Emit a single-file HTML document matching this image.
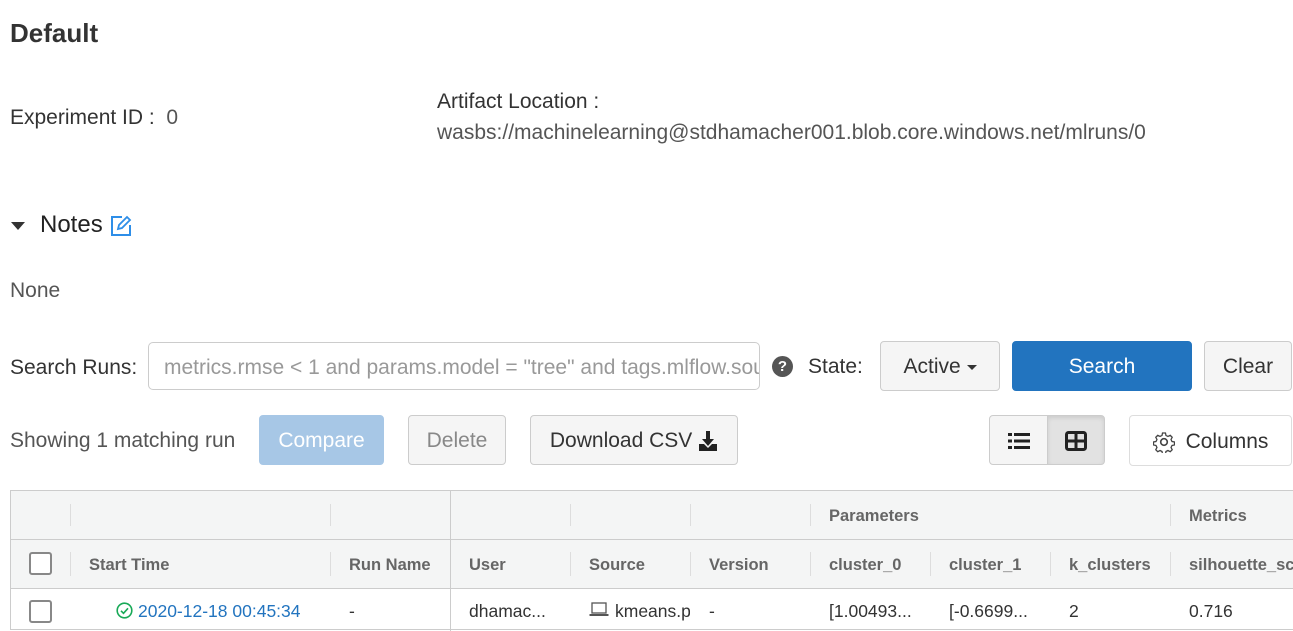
<!DOCTYPE html>
<html><head><meta charset="utf-8"><style>
*{box-sizing:border-box;margin:0;padding:0}
body{width:1293px;height:627px;overflow:hidden;background:#fff;font-family:"Liberation Sans",Arial,sans-serif;color:#333;position:relative}
.a{position:absolute;white-space:nowrap}
.btn{position:absolute;border:1px solid #ccc;border-radius:4px;background:#f5f5f5;font-size:21px;display:flex;align-items:center;justify-content:center;color:#333;padding-top:2px}
.th{position:absolute;font-size:16.5px;color:#666;white-space:nowrap;font-weight:bold}
.sep{position:absolute;width:1px;background:#ddd}
.cb{position:absolute;width:23px;height:23px;border:2px solid #888;border-radius:3px;background:#fff}
.td{position:absolute;font-size:17.5px;color:#333;white-space:nowrap;top:601px}
</style></head><body>
<div class="a" style="left:10px;top:18px;font-size:26px;font-weight:bold;color:#333">Default</div>
<div class="a" style="left:10px;top:106px;font-size:21px;color:#333">Experiment ID :&nbsp; <span style="color:#555">0</span></div>
<div class="a" style="left:437px;top:90px;font-size:21px;color:#333">Artifact Location :</div>
<div class="a" style="left:437px;top:121px;font-size:21px;color:#555">wasbs://machinelearning@stdhamacher001.blob.core.windows.net/mlruns/0</div>
<div class="a" style="left:11px;top:222px;width:0;height:0;border-left:7px solid transparent;border-right:7px solid transparent;border-top:8px solid #333"></div>
<div class="a" style="left:40px;top:211px;font-size:24px;color:#222">Notes</div>
<svg class="a" style="left:110px;top:215px" width="22" height="22" viewBox="0 0 22 22"><path d="M12 2H2v18h18V10" fill="none" stroke="#2e8ee8" stroke-width="2"/><path d="M8 14l1-4 8-8 3 3-8 8z" fill="none" stroke="#2e8ee8" stroke-width="1.8"/></svg>
<div class="a" style="left:10px;top:279px;font-size:21px;color:#555">None</div>

<div class="a" style="left:10px;top:356px;font-size:21px;color:#333">Search Runs:</div>
<div class="a" style="left:148px;top:342px;width:612px;height:48px;border:1px solid #ccc;border-radius:5px;overflow:hidden;padding:13px 15px;font-size:21px;color:#999">metrics.rmse &lt; 1 and params.model = "tree" and tags.mlflow.source</div>
<div class="a" style="left:772px;top:356px;width:21px;height:21px;border-radius:50%;background:#555;color:#fff;font-size:15px;font-weight:bold;text-align:center;line-height:21px">?</div>
<div class="a" style="left:808px;top:355px;font-size:21px;color:#333">State:</div>
<div class="btn" style="left:880px;top:341px;width:120px;height:50px">Active&nbsp;<span style="display:inline-block;border-left:5px solid transparent;border-right:5px solid transparent;border-top:5px solid #333"></span></div>
<div class="btn" style="left:1012px;top:341px;width:180px;height:50px;background:#2274bf;border-color:#2274bf;color:#fff">Search</div>
<div class="btn" style="left:1204px;top:341px;width:88px;height:50px">Clear</div>

<div class="a" style="left:10px;top:429px;font-size:21px;color:#555">Showing 1 matching run</div>
<div class="btn" style="left:259px;top:415px;width:125px;height:50px;background:#a7c7e6;border-color:#a7c7e6;color:#fff">Compare</div>
<div class="btn" style="left:408px;top:415px;width:98px;height:50px;color:#888">Delete</div>
<div class="btn" style="left:530px;top:415px;width:208px;height:50px">Download CSV&nbsp;<svg width="20" height="22" viewBox="0 0 20 22"><path d="M8 1h4v8h4l-6 7-6-7h4z" fill="#222"/><path d="M1 14h5l4 4 4-4h5v7H1z" fill="#222"/></svg></div>
<div class="btn" style="left:989px;top:415px;width:59px;height:50px;border-radius:4px 0 0 4px;background:#f5f5f5"><svg width="22" height="18" viewBox="0 0 22 18"><g fill="#222"><rect x="0" y="1" width="4" height="3"/><rect x="6" y="1" width="16" height="3"/><rect x="0" y="7.5" width="4" height="3"/><rect x="6" y="7.5" width="16" height="3"/><rect x="0" y="14" width="4" height="3"/><rect x="6" y="14" width="16" height="3"/></g></svg></div>
<div class="btn" style="left:1047px;top:415px;width:58px;height:50px;border-radius:0 4px 4px 0;background:#e2e2e2;box-shadow:inset 0 2px 4px rgba(0,0,0,.1)"><svg width="22" height="20" viewBox="0 0 22 20"><rect x="1.5" y="1.5" width="19" height="17" rx="2" fill="none" stroke="#222" stroke-width="3"/><path d="M1 10h20M11 1v18" stroke="#222" stroke-width="3"/></svg></div>
<div class="btn" style="left:1129px;top:415px;width:163px;height:51px;background:#fff;border-color:#ddd"><svg width="22" height="22" viewBox="0 0 20 20" style="margin-right:11px"><circle cx="10" cy="10" r="3" fill="none" stroke="#444" stroke-width="1.5"/><path d="M8.5 1.5h3l.5 2.5 2 1 2.3-1.2 2 2-1.2 2.3 1 2 2.5.5v3l-2.5.5-1 2 1.2 2.3-2 2-2.3-1.2-2 1-.5 2.5h-3l-.5-2.5-2-1-2.3 1.2-2-2 1.2-2.3-1-2-2.5-.5v-3l2.5-.5 1-2-1.2-2.3 2-2 2.3 1.2 2-1z" fill="none" stroke="#444" stroke-width="1.3" transform="scale(.9) translate(1.1 .5)"/></svg>Columns</div>

<div class="a" style="left:10px;top:490px;width:1283px;height:140px;border:1px solid #ccc;border-right:none"></div>
<div class="a" style="left:11px;top:491px;width:1282px;height:97px;background:#f4f5f5"></div>
<div class="a" style="left:11px;top:539px;width:1282px;height:1px;background:#ccc"></div>
<div class="a" style="left:11px;top:588px;width:1282px;height:1px;background:#ccc"></div>
<div class="a" style="left:450px;top:491px;width:1px;height:140px;background:#ccc"></div>
<div class="sep" style="left:70px;top:504px;height:22px"></div><div class="sep" style="left:330px;top:504px;height:22px"></div>
<div class="sep" style="left:570px;top:504px;height:22px"></div><div class="sep" style="left:690px;top:504px;height:22px"></div>
<div class="sep" style="left:810px;top:504px;height:22px"></div><div class="sep" style="left:1170px;top:504px;height:22px"></div>
<div class="th" style="left:829px;top:507px">Parameters</div>
<div class="th" style="left:1189px;top:507px">Metrics</div>
<div class="sep" style="left:70px;top:552px;height:24px"></div><div class="sep" style="left:330px;top:552px;height:24px"></div>
<div class="sep" style="left:570px;top:552px;height:24px"></div><div class="sep" style="left:690px;top:552px;height:24px"></div>
<div class="sep" style="left:810px;top:552px;height:24px"></div><div class="sep" style="left:930px;top:552px;height:24px"></div>
<div class="sep" style="left:1050px;top:552px;height:24px"></div><div class="sep" style="left:1170px;top:552px;height:24px"></div>
<div class="cb" style="left:29px;top:552px"></div>
<div class="th" style="left:89px;top:556px">Start Time</div>
<div class="th" style="left:349px;top:556px">Run Name</div>
<div class="th" style="left:469px;top:556px">User</div>
<div class="th" style="left:589px;top:556px">Source</div>
<div class="th" style="left:709px;top:556px">Version</div>
<div class="th" style="left:829px;top:556px">cluster_0</div>
<div class="th" style="left:949px;top:556px">cluster_1</div>
<div class="th" style="left:1069px;top:556px">k_clusters</div>
<div class="th" style="left:1189px;top:556px;width:104px;overflow:hidden">silhouette_score</div>
<div class="cb" style="left:29px;top:600px"></div>
<svg class="a" style="left:116px;top:602px" width="17" height="17" viewBox="0 0 17 17"><circle cx="8.5" cy="8.5" r="7.3" fill="none" stroke="#18a957" stroke-width="1.6"/><path d="M5 8.8l2.5 2.5 4.5-5" fill="none" stroke="#18a957" stroke-width="1.6"/></svg>
<div class="td" style="left:138px;color:#2274bf">2020-12-18 00:45:34</div>
<div class="td" style="left:349px">-</div>
<div class="td" style="left:469px">dhamac...</div>
<svg class="a" style="left:589px;top:602px" width="20" height="15" viewBox="0 0 20 15"><rect x="3" y="1" width="14" height="10" fill="none" stroke="#555" stroke-width="1.3"/><rect x="0.5" y="12" width="19" height="2" fill="#555"/></svg>
<div class="td" style="left:615px;width:75px;overflow:hidden">kmeans.py</div>
<div class="td" style="left:709px">-</div>
<div class="td" style="left:829px">[1.00493...</div>
<div class="td" style="left:949px">[-0.6699...</div>
<div class="td" style="left:1069px">2</div>
<div class="td" style="left:1189px">0.716</div>
</body></html>
